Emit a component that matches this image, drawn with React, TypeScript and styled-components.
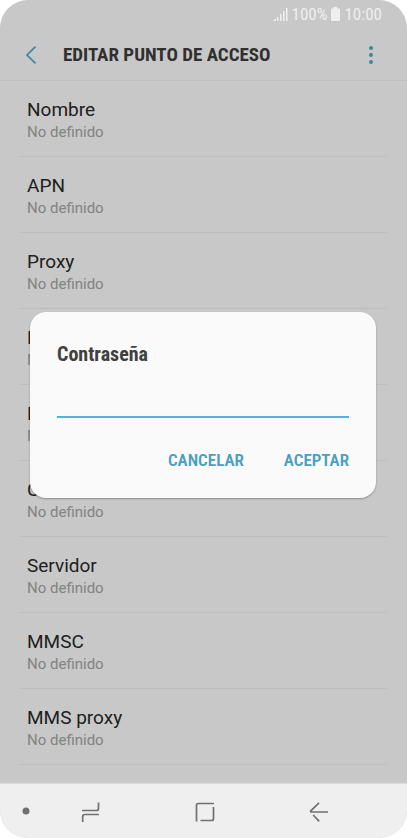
import React from 'react';
import styled, { createGlobalStyle } from 'styled-components';

const GlobalStyle = createGlobalStyle`
  *, *::before, *::after { box-sizing: border-box; }
  body {
    margin: 0;
    background: #ffffff;
    font-family: Roboto, "Liberation Sans", sans-serif;
  }
  button, input { font: inherit; }
  h1, h2, p, ul { margin: 0; padding: 0; }
`;

const condensed = '"Roboto Condensed", Roboto, "Liberation Sans", sans-serif';

const Phone = styled.div`
  display: flex;
  flex-direction: column;
  min-height: 100vh;
  border-radius: 28px;
  overflow: hidden;
  background: #c8c8c8;
`;

const StatusBar = styled.div`
  display: flex;
  align-items: center;
  justify-content: flex-end;
  gap: 4px;
  height: 28px;
  padding-right: 25px;
  color: #efefef;
  font-family: ${condensed};
  font-size: 17px;
  font-weight: 400;
  line-height: 28px;
`;

const Screen = styled.main`
  position: relative;
  display: flex;
  flex: 1;
  flex-direction: column;
`;

const AppBar = styled.header`
  display: flex;
  align-items: center;
  height: 53px;
  padding: 2px 24px 0 19px;
  border-bottom: 1px solid #bebebe;
`;

const IconButton = styled.button`
  display: flex;
  align-items: center;
  justify-content: center;
  width: 24px;
  height: 32px;
  padding: 0;
  border: 0;
  background: none;
  color: #3c86a3;
`;

const Title = styled.h1`
  flex: 1;
  margin-left: 20px;
  color: #303030;
  font-family: ${condensed};
  font-size: 19px;
  font-weight: 700;
  line-height: 28px;
  white-space: nowrap;
`;

const Settings = styled.ul`
  padding: 0 20px 18px;
  list-style: none;
`;

const Setting = styled.li`
  height: 76px;
  padding: 17px 7px 0;
  border-bottom: 1px solid #bdbdbd;
`;

const SettingName = styled.p`
  color: #202020;
  font-size: 19px;
  line-height: 24px;
`;

const SettingValue = styled.p`
  color: #828282;
  font-size: 15px;
  line-height: 20px;
`;

const DialogLayer = styled.div`
  position: absolute;
  inset: 0;
  display: flex;
  align-items: center;
  padding: 0 31px 2px 30px;
`;

const Dialog = styled.form`
  flex: 1;
  min-width: 0;
  padding: 28px 27px 22px;
  border-radius: 16px;
  background: #fafafa;
  box-shadow: 0 1px 2px rgba(0, 0, 0, 0.3);
`;

const DialogTitle = styled.label`
  display: block;
  color: #404040;
  font-family: ${condensed};
  font-size: 20px;
  font-weight: 700;
  line-height: 28px;
`;

const PasswordInput = styled.input`
  display: block;
  width: 100%;
  height: 36px;
  margin-top: 14px;
  padding: 0;
  border: 0;
  border-bottom: 2px solid #4fb3db;
  border-radius: 0;
  outline: 0;
  background: none;
  color: #303030;
  font-size: 18px;
`;

const Actions = styled.div`
  display: flex;
  justify-content: flex-end;
  gap: 40px;
  margin-top: 26px;
`;

const ActionButton = styled.button`
  height: 32px;
  padding: 0;
  border: 0;
  background: none;
  color: #4a9fc0;
  font-family: ${condensed};
  font-size: 17px;
  font-weight: 600;
  line-height: 32px;
`;

const NavBar = styled.nav`
  display: grid;
  grid-template-columns: 34px 1fr 1fr 1fr 31px;
  align-items: center;
  height: 55px;
  border-top: 1px solid #dcdcdc;
  background: #efefef;
`;

const NavButton = styled.button<{ $edge?: boolean }>`
  display: flex;
  align-items: center;
  justify-content: center;
  height: 48px;
  padding: ${({ $edge }) => ($edge ? '0 0 0 18px' : '2px 0 0')};
  border: 0;
  background: none;
  color: #707070;
`;

const settings = [
  'Nombre',
  'APN',
  'Proxy',
  'Puerto',
  'Nombre de usuario',
  'Contraseña',
  'Servidor',
  'MMSC',
  'MMS proxy',
];

function SignalIcon() {
  return (
    <svg width="15" height="14" viewBox="0 0 15 14" fill="currentColor" aria-hidden="true">
      <path d="M0 14l3-3v3zM4 10h1.500v4H4zM7 7h1.500v7H7zM10 4h1.500v10H10zM13 1h1.500v13H13z" />
    </svg>
  );
}

function BatteryIcon() {
  return (
    <svg width="9" height="14" viewBox="0 0 9 14" fill="currentColor" aria-hidden="true">
      <path d="M2.500 0h4v1.500H8a1 1 0 0 1 1 1V13a1 1 0 0 1-1 1H1a1 1 0 0 1-1-1V2.500a1 1 0 0 1 1-1h1.500z" />
    </svg>
  );
}

function NavIcon({ d }: { d: string }) {
  return (
    <svg width="20" height="20" viewBox="0 0 20 20" fill="none" stroke="currentColor" strokeWidth="1.7" aria-hidden="true">
      <path d={d} />
    </svg>
  );
}

export default function App() {
  return (
    <>
      <GlobalStyle />
      <Phone>
        <StatusBar>
          <SignalIcon />
          <span>100%</span>
          <BatteryIcon />
          <span>10:00</span>
        </StatusBar>
        <Screen>
          <AppBar>
            <IconButton type="button" aria-label="Atrás">
              <svg width="12" height="18" viewBox="0 0 12 18" fill="none" stroke="currentColor" strokeWidth="1.7" aria-hidden="true">
                <path d="M10.500 0.700L2 9l8.500 8.300" />
              </svg>
            </IconButton>
            <Title>EDITAR PUNTO DE ACCESO</Title>
            <IconButton type="button" aria-label="Más opciones">
              <svg width="4" height="18" viewBox="0 0 4 18" fill="currentColor" aria-hidden="true">
                <circle cx="2" cy="2" r="2" />
                <circle cx="2" cy="9" r="2" />
                <circle cx="2" cy="16" r="2" />
              </svg>
            </IconButton>
          </AppBar>
          <Settings>
            {settings.map((name) => (
              <Setting key={name}>
                <SettingName>{name}</SettingName>
                <SettingValue>No definido</SettingValue>
              </Setting>
            ))}
          </Settings>
          <DialogLayer>
            <Dialog role="dialog" aria-labelledby="dialog-title" onSubmit={(e) => e.preventDefault()}>
              <DialogTitle id="dialog-title" htmlFor="password">Contraseña</DialogTitle>
              <PasswordInput id="password" type="password" />
              <Actions>
                <ActionButton type="button">CANCELAR</ActionButton>
                <ActionButton type="submit">ACEPTAR</ActionButton>
              </Actions>
            </Dialog>
          </DialogLayer>
        </Screen>
        <NavBar>
          <NavButton type="button" aria-label="Ocultar barra" $edge>
            <svg width="8" height="8" viewBox="0 0 8 8" fill="currentColor" aria-hidden="true">
              <circle cx="4" cy="4" r="3.500" />
            </svg>
          </NavButton>
          <NavButton type="button" aria-label="Recientes">
            <NavIcon d="M1 8.500h14.500q2 0 2-2V0.500M1.700 20v-5.500q0-2 2-2H18" />
          </NavButton>
          <NavButton type="button" aria-label="Inicio">
            <NavIcon d="M1.500 19.500V3.500q0-2 2-2H19M18.500 5v11.500q0 2-2 2H5.500" />
          </NavButton>
          <NavButton type="button" aria-label="Volver">
            <NavIcon d="M10 0.800L1.800 8.800q-.8 1.200 .8 1.200H19M4.200 13l6 6.300" />
          </NavButton>
        </NavBar>
      </Phone>
    </>
  );
}
